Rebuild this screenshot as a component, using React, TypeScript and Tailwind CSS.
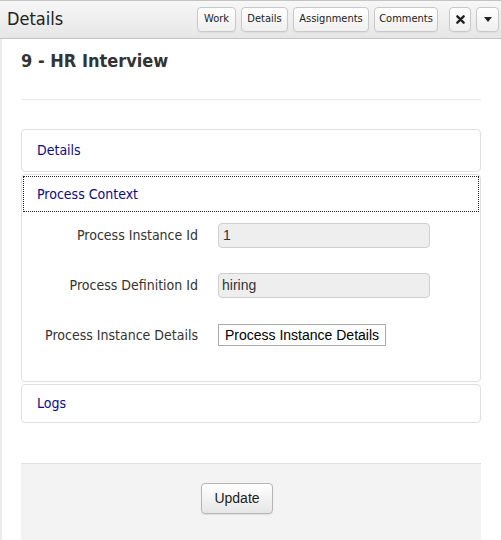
import React from "react";

const tahoma = "font-['DejaVu_Sans_Condensed','DejaVu_Sans',sans-serif]";
const arial = "font-['Liberation_Sans',Arial,sans-serif]";

function HeaderButton({ children, className = "" }: { children: React.ReactNode; className?: string }) {
  return (
    <button
      className={`h-[25px] rounded-[4px] border border-[#c8c8c8] bg-gradient-to-b from-white to-[#efefef] text-[11px] text-[#222] shadow-[0_1px_1px_rgba(0,0,0,0.05)] flex items-center justify-center ${className}`}
    >
      {children}
    </button>
  );
}

function FieldRow({ label, children }: { label: string; children: React.ReactNode }) {
  return (
    <div className="flex items-center">
      <div className={`w-[176px] text-right text-[14px] text-[#333] ${tahoma}`}>{label}</div>
      <div className="ml-[20px]">{children}</div>
    </div>
  );
}

export default function App() {
  return (
    <div className={`w-[501px] h-[540px] overflow-hidden bg-white ${tahoma}`}>
      {/* top bar */}
      <div className="h-[39px] border-t border-b border-[#c4c4c4] bg-gradient-to-b from-[#f7f7f7] to-[#e6e6e6] flex items-center pl-[7px] pr-[2px]">
        <span className="text-[18px] text-[#222] leading-none mt-[-2px]">Details</span>
        <div className="ml-auto flex items-center">
          <HeaderButton className="w-[39px]">Work</HeaderButton>
          <HeaderButton className="w-[47px] ml-[5px]">Details</HeaderButton>
          <HeaderButton className="w-[76px] ml-[5px]">Assignments</HeaderButton>
          <HeaderButton className="w-[64px] ml-[5px]">Comments</HeaderButton>
          <HeaderButton className="w-[22px] ml-[11px]">
            <svg width="9" height="9" viewBox="0 0 10 10">
              <path d="M1.5 1.5 L8.5 8.5 M8.5 1.5 L1.5 8.5" stroke="#222" strokeWidth="2.6" strokeLinecap="round" />
            </svg>
          </HeaderButton>
          <HeaderButton className="w-[23px] ml-[5px]">
            <svg width="8" height="5" viewBox="0 0 8 5">
              <path d="M0 0 H8 L4 5 Z" fill="#222" />
            </svg>
          </HeaderButton>
        </div>
      </div>

      {/* body */}
      <div className="border-l-2 border-[#ececec] h-[501px] pl-[19px] pr-[20px]">
        <h1 className="pt-[11px] text-[18px] font-bold text-[#333] leading-[22px]">9 - HR Interview</h1>
        <div className="mt-[27px] border-t border-[#e8e8e8]" />

        <div className="mt-[29px] flex flex-col">
          <div className="h-[43px] rounded-[4px] border border-[#e0e0e0] flex items-center pl-[15px]">
            <span className="text-[14px] text-[#0b0b86]">Details</span>
          </div>

          <div className="mt-[2px] h-[208px] rounded-[4px] border border-[#e0e0e0]">
            <div className="mx-px mt-px h-[36px] border border-dotted border-[#222] flex items-center pl-[13px]">
              <span className="text-[14px] text-[#0b0b86]">Process Context</span>
            </div>
            <div className="mt-[11px] flex flex-col gap-[25px]">
              <FieldRow label="Process Instance Id">
                <div className={`w-[212px] h-[25px] rounded-[4px] border border-[#cfcfcf] bg-[#eeeeee] flex items-center pl-[4px] text-[14px] text-[#333] ${arial}`}>
                  1
                </div>
              </FieldRow>
              <FieldRow label="Process Definition Id">
                <div className={`w-[212px] h-[25px] rounded-[4px] border border-[#cfcfcf] bg-[#eeeeee] flex items-center pl-[3px] text-[14px] text-[#333] ${arial}`}>
                  hiring
                </div>
              </FieldRow>
              <FieldRow label="Process Instance Details">
                <button className={`h-[22px] w-[168px] border border-[#aaaaaa] bg-white text-[14px] text-black leading-none ${arial}`}>
                  Process Instance Details
                </button>
              </FieldRow>
            </div>
          </div>

          <div className="mt-[2px] h-[39px] rounded-[4px] border border-[#e0e0e0] flex items-center pl-[15px]">
            <span className="text-[14px] text-[#0b0b86]">Logs</span>
          </div>
        </div>

        <div className="mt-[40px] h-[80px] border-t border-[#e2e2e2] bg-[#f3f3f3] flex pt-[19px] pl-[180px]">
          <button className={`h-[31px] w-[72px] rounded-[4px] border border-[#b5b5b5] bg-gradient-to-b from-white to-[#e6e6e6] text-[14px] text-[#222] shadow-[0_1px_1px_rgba(0,0,0,0.08)] ${arial}`}>
            Update
          </button>
        </div>
      </div>
    </div>
  );
}
